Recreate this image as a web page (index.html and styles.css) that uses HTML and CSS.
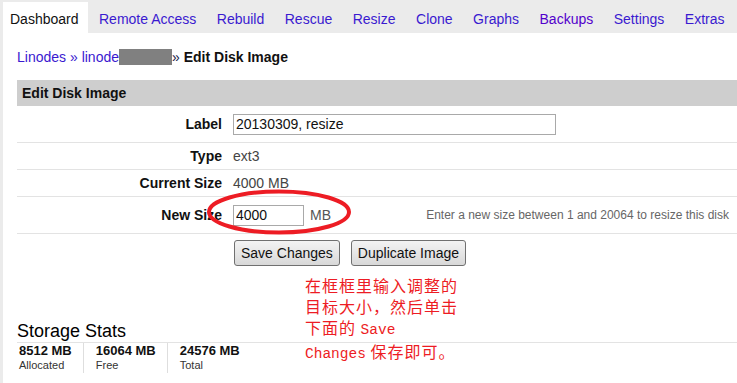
FILE: index.html
```html
<!DOCTYPE html>
<html>

<head>
    <title>Edit Disk Image</title>
    <meta charset="utf-8" />
    <link rel="stylesheet" href="styles.css">
</head>

<body>

    <div id="tabs">
        <a class="tab active" href="#">Dashboard</a>
        <a class="tab" href="#">Remote Access</a>
        <a class="tab" href="#">Rebuild</a>
        <a class="tab" href="#">Rescue</a>
        <a class="tab" href="#">Resize</a>
        <a class="tab" href="#">Clone</a>
        <a class="tab" href="#">Graphs</a>
        <a class="tab visited" href="#">Backups</a>
        <a class="tab" href="#">Settings</a>
        <a class="tab" href="#">Extras</a>
    </div>

    <div id="page">
        <div class="crumbs">
            <a href="#">Linodes</a><span class="sep"> » </span><a href="#">linode</a><span class="masked"></span><span class="sep dark">» </span><b>Edit Disk Image</b>
        </div>

        <div class="sectionHead">Edit Disk Image</div>

        <form id="diskForm">
            <div class="row tall">
                <label class="key" for="label">Label</label>
                <div class="val"><input type="text" id="label" class="wide" value="20130309, resize" /></div>
                <div class="help"></div>
            </div>
            <div class="row">
                <div class="key">Type</div>
                <div class="val">ext3</div>
                <div class="help"></div>
            </div>
            <div class="row">
                <div class="key">Current Size</div>
                <div class="val">4000 MB</div>
                <div class="help"></div>
            </div>
            <div class="row tall">
                <label class="key" for="size">New Size</label>
                <div class="val"><input type="text" id="size" class="small" value="4000" /><span class="unit">MB</span></div>
                <div class="help">Enter a new size between 1 and 20064 to resize this disk</div>
            </div>
            <div class="row buttons">
                <div class="key"></div>
                <div class="val">
                    <button type="submit">Save Changes</button>
                    <button type="button">Duplicate Image</button>
                </div>
            </div>
        </form>

        <h2 class="statsHead">Storage Stats</h2>
        <div class="stats">
            <div class="stat first"><b>8512 MB</b><span>Allocated</span></div>
            <div class="stat"><b>16064 MB</b><span>Free</span></div>
            <div class="stat"><b>24576 MB</b><span>Total</span></div>
        </div>
    </div>

    <!-- 标注 -->
    <svg id="circle" width="160" height="60" viewBox="0 0 160 60">
        <ellipse cx="78" cy="29" rx="70" ry="20.5" fill="none" stroke="#ed1c24" stroke-width="4" />
    </svg>
    <div id="note">在框框里输入调整的<br>目标大小，然后单击<br>下面的 <span class="mono">Save</span><br><span class="mono">Changes</span> 保存即可。</div>

</body>

</html>
```

FILE: styles.css
```css
body {
    margin: 0;
    padding: 0;
    position: relative;
    overflow: hidden;
    background-color: #ebebeb;
    font-family: "Liberation Sans", Arial, sans-serif;
    font-size: 14px;
    color: #111;
}

a {
    color: #3a1ad0;
    text-decoration: none;
}

/* 顶部标签 */
#tabs {
    display: flex;
    gap: 4.5px;
    height: 31px;
    padding: 2px 0 0 3px;
    background-color: #ebebeb;
}

.tab {
    padding: 3px 9px 0 7px;
    line-height: 28px;
    height: 28px;
    white-space: nowrap;
}

.tab.active {
    background-color: #fff;
    color: #111;
}

.tab.visited {
    color: #5200cc;
}

#page {
    margin-left: 3px;
    min-height: 350px;
    background-color: #fff;
    padding: 16px 0 0 14px;
}

.crumbs {
    line-height: 16px;
    height: 16px;
    margin-bottom: 15px;
    white-space: nowrap;
}

.crumbs .sep {
    color: #3a1ad0;
}

.crumbs .sep.dark {
    color: #1a1a4a;
}

.masked {
    display: inline-block;
    width: 53px;
    height: 16px;
    vertical-align: -3px;
    background-color: #808080;
}

.sectionHead {
    height: 26px;
    line-height: 26px;
    padding-left: 5px;
    background-color: #cecece;
    font-weight: bold;
}

/* 表单行 */
.row {
    display: grid;
    grid-template-columns: 205px 1fr auto;
    column-gap: 11px;
    align-items: center;
    height: 26px;
    padding: 0;
    line-height: 18px;
    border-bottom: 1px solid #e3e3e3;
}

.row.tall {
    height: 36px;
}

.row.buttons {
    height: 26px;
    border-bottom: none;
    padding: 6px 0 0;
}

.key {
    text-align: right;
    font-weight: bold;
    color: #111;
}

.val {
    display: flex;
    align-items: center;
    color: #444;
    white-space: nowrap;
}

.help {
    padding-right: 8px;
    font-size: 12px;
    color: #666;
}

input {
    box-sizing: border-box;
    height: 21px;
    margin: 0;
    padding: 0 2px;
    border: 1px solid #a9a9a9;
    font-family: "Liberation Sans", Arial, sans-serif;
    font-size: 14px;
    color: #111;
}

input.wide {
    width: 323px;
}

input.small {
    width: 71px;
}

.unit {
    margin-left: 6px;
    color: #555;
}

button {
    height: 26px;
    margin: 0 10px 0 1px;
    padding: 0 6px;
    border: 1px solid #707070;
    border-radius: 3px;
    background: linear-gradient(#f3f3f3, #e6e6e6 50%, #d8d8d8);
    font-family: "Liberation Sans", Arial, sans-serif;
    font-size: 14px;
    color: #111;
}

/* 存储统计 */
.statsHead {
    margin: 55px 0 0;
    height: 21px;
    line-height: 21px;
    font-size: 18px;
    font-weight: normal;
    color: #000;
    border-bottom: 1px solid #e3e3e3;
}

.stats {
    display: flex;
}

.stat {
    display: flex;
    flex-direction: column;
    padding: 1px 11px 1px 12px;
    border-left: 1px solid #dedede;
}

.stat.first {
    padding-left: 2px;
    border-left: none;
}

.stat b {
    font-size: 13px;
    line-height: 14px;
    color: #111;
}

.stat span {
    font-size: 11px;
    line-height: 14px;
    color: #333;
}

#circle {
    position: absolute;
    left: 201px;
    top: 183px;
}

#note {
    position: absolute;
    left: 305px;
    top: 275px;
    font-family: "Noto Sans CJK SC", sans-serif;
    font-size: 16px;
    letter-spacing: 1px;
    line-height: 21px;
    color: #ed1c24;
}

#note .mono {
    font-family: "Liberation Mono", monospace;
    font-size: 14.5px;
    letter-spacing: 0;
}
```
